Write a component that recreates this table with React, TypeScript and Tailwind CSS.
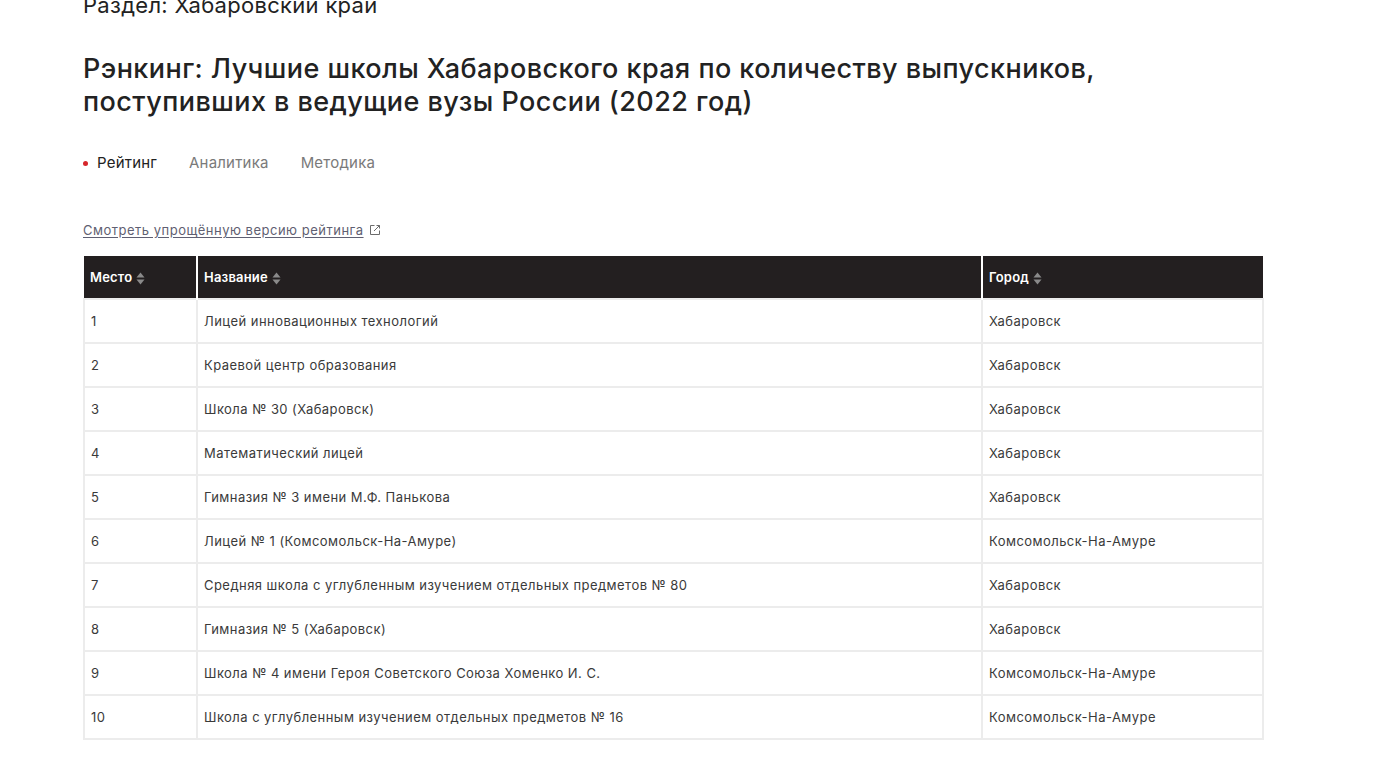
import React from 'react';

const rows = [
  { place: 1, name: 'Лицей инновационных технологий', city: 'Хабаровск' },
  { place: 2, name: 'Краевой центр образования', city: 'Хабаровск' },
  { place: 3, name: 'Школа № 30 (Хабаровск)', city: 'Хабаровск' },
  { place: 4, name: 'Математический лицей', city: 'Хабаровск' },
  { place: 5, name: 'Гимназия № 3 имени М.Ф. Панькова', city: 'Хабаровск' },
  { place: 6, name: 'Лицей № 1 (Комсомольск-На-Амуре)', city: 'Комсомольск-На-Амуре' },
  { place: 7, name: 'Средняя школа с углубленным изучением отдельных предметов № 80', city: 'Хабаровск' },
  { place: 8, name: 'Гимназия № 5 (Хабаровск)', city: 'Хабаровск' },
  { place: 9, name: 'Школа № 4 имени Героя Советского Союза Хоменко И. С.', city: 'Комсомольск-На-Амуре' },
  { place: 10, name: 'Школа с углубленным изучением отдельных предметов № 16', city: 'Комсомольск-На-Амуре' },
];

function SortIcon() {
  return (
    <svg width="9" height="13" viewBox="0 0 9 13" className="ml-1 inline-block">
      <path d="M4.5 0.5 L8.5 5.5 L0.5 5.5 Z" fill="#8a8a8a" />
      <path d="M4.5 12.5 L8.5 7.5 L0.5 7.5 Z" fill="#8a8a8a" />
    </svg>
  );
}

function ExternalIcon() {
  return (
    <svg width="12" height="12" viewBox="0 0 12 12" className="ml-[5px] inline-block" fill="none" stroke="#6b6b6b" strokeWidth="1">
      <path d="M5.5 1.5 H1.5 V10.5 H10.5 V6.5" />
      <path d="M5 7 L10.5 1.5" />
      <path d="M7.5 1.5 H10.5 V4.5" />
    </svg>
  );
}

export default function App() {
  return (
    <div className="min-h-[782px] bg-white text-[#222] font-['Inter','Noto_Sans',sans-serif]">
      <div className="pl-[83px] pr-[120px]">
        <div className="-mt-[8px] text-[22px] leading-[26px] tracking-[0.3px] text-[#222]">Раздел: Хабаровский край</div>

        <h1 className="mt-[34px] text-[27px] leading-[33px] font-medium tracking-[0.45px] text-[#222]">
          Рэнкинг: Лучшие школы Хабаровского края по количеству выпускников,
          <br />
          поступивших в ведущие вузы России (2022 год)
        </h1>

        <div className="mt-[35px] flex items-center text-[15px] leading-[20px] tracking-[0.2px]">
          <span className="mr-[9px] h-[5px] w-[5px] rounded-full bg-[#d6262b]" />
          <span className="text-[#222]">Рейтинг</span>
          <span className="ml-[32px] text-[#7a7a7a]">Аналитика</span>
          <span className="ml-[32px] text-[#7a7a7a]">Методика</span>
        </div>

        <div className="mt-[48px] flex items-center text-[13px] leading-[18px] tracking-[0.5px]">
          <a className="text-[#5f5f72] underline underline-offset-2">Смотреть упрощённую версию рейтинга</a>
          <ExternalIcon />
        </div>

        <table className="mt-[17px] w-[1181px] border-collapse text-[13px] tracking-[0.45px]">
          <thead>
            <tr className="h-[43px] bg-[#231f20] text-left text-white">
              <th className="w-[113px] border-r-2 border-white px-[6px] pt-[2px] font-semibold tracking-[0.2px]">
                Место<SortIcon />
              </th>
              <th className="border-r-2 border-white px-[6px] pt-[2px] font-semibold tracking-[0.2px]">
                Название<SortIcon />
              </th>
              <th className="w-[281px] px-[6px] pt-[2px] font-semibold tracking-[0.2px]">
                Город<SortIcon />
              </th>
            </tr>
          </thead>
          <tbody>
            {rows.map((r) => (
              <tr key={r.place} className="h-[44px] text-[#3a3a3a]">
                <td className="border-2 border-[#ececec] px-[6px] pt-[2px]">{r.place}</td>
                <td className="border-2 border-[#ececec] px-[6px] pt-[2px]">{r.name}</td>
                <td className="border-2 border-[#ececec] px-[6px] pt-[2px]">{r.city}</td>
              </tr>
            ))}
          </tbody>
        </table>
      </div>
    </div>
  );
}
